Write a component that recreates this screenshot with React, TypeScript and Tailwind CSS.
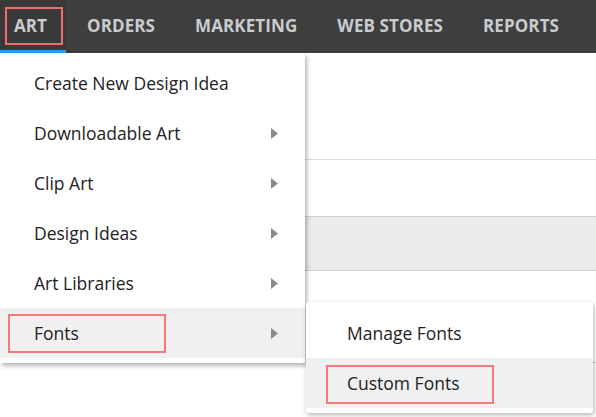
import React from "react";

const font = { fontFamily: '"Open Sans", "Liberation Sans", sans-serif' };

function Caret() {
  return (
    <svg width="7" height="11" viewBox="0 0 7 11" className="block">
      <path d="M0 0 L7 5.5 L0 11 Z" fill="#8a8a8a" />
    </svg>
  );
}

const navItems = ["ORDERS", "MARKETING", "WEB STORES", "REPORTS"];

const menuItems: { label: string; sub: boolean }[] = [
  { label: "Create New Design Idea", sub: false },
  { label: "Downloadable Art", sub: true },
  { label: "Clip Art", sub: true },
  { label: "Design Ideas", sub: true },
  { label: "Art Libraries", sub: true },
];

export default function App() {
  return (
    <div className="relative w-[596px] h-[417px] overflow-hidden bg-white" style={font}>
      {/* Top nav */}
      <nav className="flex h-[53px] bg-[#3e3e3e]">
        <div className="relative flex items-center w-[66px] pl-[14px] pt-[1px] bg-[#393939] border-b-[3px] border-[#2f9be2]">
          <span className="text-[17px] font-bold text-[#c9ccce]">ART</span>
          <div className="absolute left-[5px] top-[7px] w-[58px] h-[38px] border-2 border-[#f06e6e]" />
        </div>
        <div className="flex items-center gap-[40px] pl-[21px] pb-[2px]">
          {navItems.map((n) => (
            <span key={n} className="text-[17px] font-bold text-[#c9ccce] tracking-[0.1px]">
              {n}
            </span>
          ))}
        </div>
      </nav>

      {/* Page content behind */}
      <div className="flex flex-col">
        <div className="h-[107px] border-b border-[#dcdcdc]" />
        <div className="h-[57px] border-b border-[#d0d0d0]" />
        <div className="h-[54px] bg-[#ebebeb] border-b border-[#cfcfcf]" />
        <div className="h-[92px] border-b border-[#d6d6d6]" />
      </div>

      {/* Main dropdown */}
      <div className="absolute left-0 top-[53px] w-[305px] bg-white py-[5px] shadow-[2px_3px_4px_rgba(0,0,0,0.28)]">
        {menuItems.map((m) => (
          <div key={m.label} className="flex items-center justify-between h-[50px] pl-[34px] pr-[27px]">
            <span className="text-[17.5px] text-[#222222]">{m.label}</span>
            {m.sub && <Caret />}
          </div>
        ))}
        <div className="relative flex items-center justify-between h-[50px] pl-[34px] pr-[27px] bg-[#f0f0f0]">
          <span className="text-[17.5px] text-[#222222]">Fonts</span>
          <Caret />
          <div className="absolute left-[8px] top-[6px] w-[158px] h-[39px] border-2 border-[#f47a7a]" />
        </div>
      </div>

      {/* Submenu */}
      <div className="absolute left-[306px] top-[302px] w-[287px] bg-white rounded-[3px] pt-[6px] pb-[5px] shadow-[1px_2px_5px_rgba(0,0,0,0.3)]">
        <div className="flex items-center h-[50px] pl-[41px]">
          <span className="text-[17.5px] text-[#222222]">Manage Fonts</span>
        </div>
        <div className="relative flex items-center h-[50px] pl-[41px] bg-[#f0f0f0]">
          <span className="text-[17.5px] text-[#222222]">Custom Fonts</span>
          <div className="absolute left-[20px] top-[7px] w-[168px] h-[39px] border-2 border-[#f47a7a]" />
        </div>
      </div>
    </div>
  );
}
